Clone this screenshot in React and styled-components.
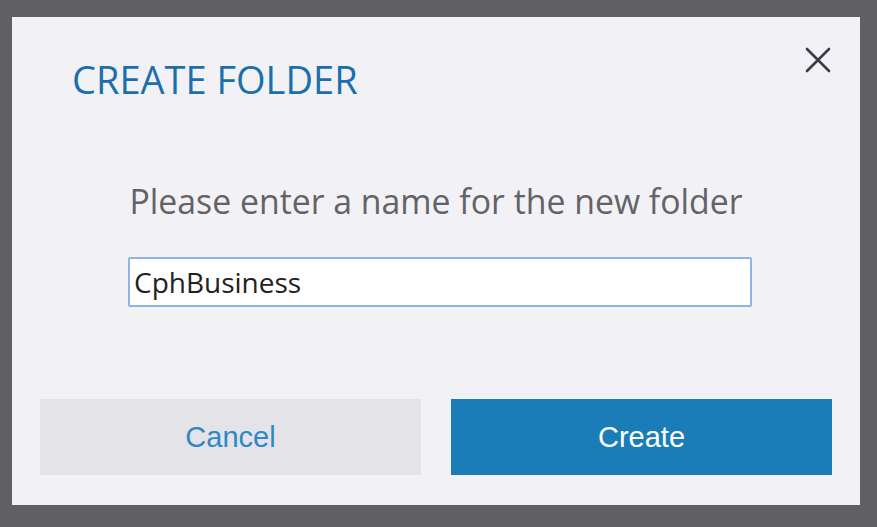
import React, { useState } from "react";
import styled, { createGlobalStyle } from "styled-components";

const GlobalStyle = createGlobalStyle`
  html, body {
    margin: 0;
    padding: 0;
    background: #606062;
  }
  * { box-sizing: border-box; }
`;

const Backdrop = styled.div`
  width: 877px;
  height: 527px;
  padding: 17px 17px 22px 12px;
  background: #606062;
`;

const Dialog = styled.div`
  position: relative;
  width: 848px;
  height: 488px;
  background: #f2f2f6;
  display: flex;
  flex-direction: column;
  font-family: "Open Sans", "Noto Sans", sans-serif;
`;

const Header = styled.header`
  padding: 36px 60px 0;
`;

const Title = styled.h1`
  margin: 0;
  font-size: 38px;
  font-weight: 400;
  line-height: 52px;
  color: #1b6fab;
`;

const CloseButton = styled.button`
  position: absolute;
  top: 25px;
  right: 24px;
  width: 36px;
  height: 36px;
  padding: 0;
  border: none;
  background: transparent;
  display: flex;
  align-items: center;
  justify-content: center;
  cursor: pointer;
`;

const Body = styled.section`
  flex: 1;
  display: flex;
  flex-direction: column;
  align-items: center;
  padding-top: 73px;
`;

const Prompt = styled.p`
  margin: 0;
  font-size: 33.8px;
  line-height: 46px;
  color: #636366;
`;

const NameInput = styled.input`
  margin: 33px 0 0 8px;
  width: 624px;
  height: 50px;
  padding: 0 4px;
  border: 2px solid #8fb2ea;
  border-radius: 2px;
  background: #ffffff;
  font-family: "Open Sans", "Noto Sans", sans-serif;
  font-size: 28px;
  color: #222;
  outline: none;
  caret-color: #000;
`;

const Footer = styled.footer`
  display: grid;
  grid-template-columns: 1fr 1fr;
  gap: 30px;
  padding: 0 28px 30px;
`;

const ActionButton = styled.button`
  height: 76px;
  border: none;
  font-family: "Liberation Sans", Arial, sans-serif;
  font-size: 29px;
  cursor: pointer;
  background: ${(p) => (p.primary ? "#1b7db8" : "#e3e3e8")};
  color: ${(p) => (p.primary ? "#ffffff" : "#2e88c6")};
`;

const App = () => {
  const [name, setName] = useState("CphBusiness");

  return (
    <>
      <GlobalStyle />
      <Backdrop>
        <Dialog>
          <Header>
            <Title>CREATE FOLDER</Title>
          </Header>
          <CloseButton aria-label="Close">
            <svg width="26" height="26" viewBox="0 0 26 26">
              <path
                d="M2 2 L24 24 M24 2 L2 24"
                stroke="#3b3b47"
                strokeWidth="2.6"
                strokeLinecap="round"
              />
            </svg>
          </CloseButton>
          <Body>
            <Prompt>Please enter a name for the new folder</Prompt>
            <NameInput
              autoFocus
              value={name}
              onChange={(e) => setName(e.target.value)}
            />
          </Body>
          <Footer>
            <ActionButton>Cancel</ActionButton>
            <ActionButton primary>Create</ActionButton>
          </Footer>
        </Dialog>
      </Backdrop>
    </>
  );
};

export default App;
